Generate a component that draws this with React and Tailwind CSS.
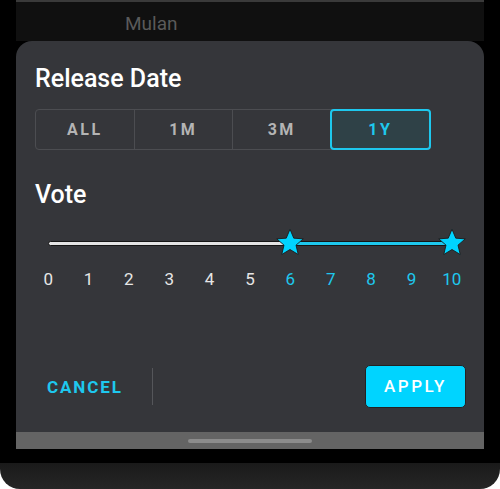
import { useState } from 'react';

const ranges = ['ALL', '1M', '3M', '1Y'];
const votes = [0, 1, 2, 3, 4, 5, 6, 7, 8, 9, 10];

const Star = () => (
  <svg viewBox="0 0 24 24" className="w-[30px] h-[30px]">
    <path
      d="M12 1.8l3 7.1 7.6.6-5.8 5 1.8 7.5L12 18l-6.6 4 1.8-7.5-5.8-5 7.6-.6z"
      fill="#00d4ff"
      stroke="#1a1a1a"
      strokeWidth="0.7"
      strokeLinejoin="round"
    />
  </svg>
);

const App = () => {
  const [range, setRange] = useState('1Y');
  const low = 6;
  const high = 10;

  return (
    <div className="w-[500px] h-[489px] bg-white overflow-hidden" style={{ fontFamily: 'Roboto, "Noto Sans", sans-serif' }}>
      <div className="h-[463px] bg-black px-[16px]">
        <div className="w-[468px] h-[449px] flex flex-col">
          <div className="h-[2px] bg-[#3a3a3a]" />
          <div className="h-[39px] bg-[#101010] flex items-center pl-[109px] pt-[5px]">
            <span className="text-[19px] text-[#5a5a5a]">Mulan</span>
          </div>

          {/* Filter sheet */}
          <div className="h-[391px] bg-[#35363a] rounded-t-[16px] flex flex-col px-[19px]">
            <h2 className="mt-[24px] text-[25px] leading-[28px] font-medium text-white">Release Date</h2>

            <div className="mt-[16px] w-[396px] h-[41px] flex rounded-[4px] border border-[#4c4d51]">
              {ranges.map((r, i) => (
                <button
                  key={r}
                  onClick={() => setRange(r)}
                  className={`flex-1 flex items-center justify-center text-[16px] font-bold tracking-[2.5px] ${
                    range === r
                      ? 'bg-[#2f4147] text-[#1ec8ee] border-2 border-[#1ec8ee] rounded-[4px] -m-px'
                      : 'text-[#b4b4b4]'
                  } ${i > 0 && range !== r ? 'border-l border-[#4c4d51]' : ''}`}
                >
                  {r}
                </button>
              ))}
            </div>

            <h2 className="mt-[31px] text-[25px] leading-[28px] font-medium text-white">Vote</h2>

            <div className="mt-[19px] ml-[13px] w-[404px] h-[30px] relative">
              <div className="absolute left-0 top-[13px] h-[5px] bg-[#e4e4e4] rounded-full border border-[#161616]" style={{ width: `${(low / 10) * 100}%` }} />
              <div className="absolute top-[13px] h-[5px] bg-[#1ec8ee] border-y border-[#161616]" style={{ left: `${(low / 10) * 100}%`, width: `${((high - low) / 10) * 100}%` }} />
              <div className="absolute -top-[1px] -translate-x-1/2" style={{ left: `${(low / 10) * 100}%` }}>
                <Star />
              </div>
              <div className="absolute -top-[1px] -translate-x-1/2" style={{ left: `${(high / 10) * 100}%` }}>
                <Star />
              </div>
            </div>

            <div className="mt-[11px] -ml-[7px] w-[444px] grid grid-cols-11 h-[20px] leading-[20px] text-[17px]">
              {votes.map((v) => (
                <span key={v} className={`text-center ${v >= low && v <= high ? 'text-[#1ec8ee]' : 'text-[#e6e6e6]'}`}>
                  {v}
                </span>
              ))}
            </div>

            <div className="mt-[76px] h-[43px] flex items-center">
              <button className="ml-[12px] mt-[2px] text-[17px] font-bold tracking-[1.9px] text-[#1ec8ee]">CANCEL</button>
              <div className="ml-[29px] w-px h-[37px] bg-[#55565a]" />
              <button className="ml-auto -mr-px w-[101px] h-[43px] rounded-[5px] bg-[#00d4ff] text-white text-[17px] font-medium tracking-[2.5px] border border-[#222]">
                APPLY
              </button>
            </div>
          </div>

          <div className="h-[17px] bg-[#646464] flex items-center justify-center">
            <div className="w-[124px] h-[4px] rounded-full bg-[#8c8c8c]" />
          </div>
        </div>
      </div>
      <div className="h-[26px] bg-gradient-to-b from-[#1a1a1a] to-[#262626] rounded-b-[20px]" />
    </div>
  );
};

export default App;
